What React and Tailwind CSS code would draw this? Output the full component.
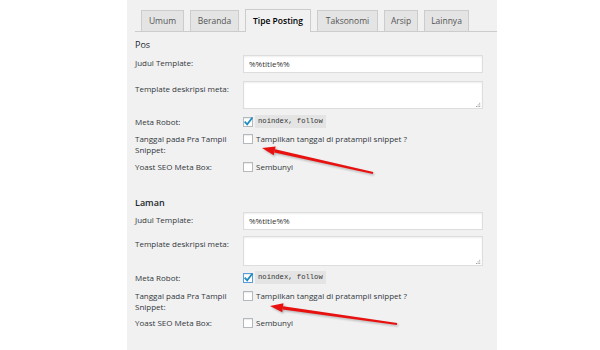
import React from "react";

const TABS = [
  { label: "Umum", w: "w-[43px]" },
  { label: "Beranda", w: "w-[49px]" },
  { label: "Tipe Posting", w: "w-[66px]", active: true },
  { label: "Taksonomi", w: "w-[61px]" },
  { label: "Arsip", w: "w-[34px]" },
  { label: "Lainnya", w: "w-[45px]" },
];

function Check({ checked, focus }) {
  return (
    <span
      className={
        "relative inline-block w-[10px] h-[10px] shrink-0 bg-white border shadow-[inset_0_1px_1px_rgba(0,0,0,0.08)] " +
        (focus ? "border-[#5b9dd9]" : "border-[#b4b9be]")
      }
    >
      {checked && (
        <svg viewBox="0 0 10 10" className="absolute -left-[1px] -top-[2px] w-[11px] h-[11px]">
          <path d="M1.5 5.2 L3.8 7.6 L8.6 1.4" fill="none" stroke="#1e8cbe" strokeWidth="1.6" />
        </svg>
      )}
    </span>
  );
}

function Grip() {
  return (
    <svg viewBox="0 0 6 6" className="absolute right-[1px] bottom-[1px] w-[5px] h-[5px]">
      <rect x="4" y="1" width="1" height="1" fill="#777" />
      <rect x="2" y="3" width="1" height="1" fill="#777" />
      <rect x="4" y="3" width="1" height="1" fill="#777" />
      <rect x="0" y="5" width="1" height="1" fill="#777" />
      <rect x="2" y="5" width="1" height="1" fill="#777" />
      <rect x="4" y="5" width="1" height="1" fill="#777" />
    </svg>
  );
}

function Section({ title, bold, gaps }) {
  return (
    <div>
      <div className={"h-[12px] leading-[12px] text-[9px] text-[#23282d] " + (bold ? "font-semibold" : "")}>{title}</div>

      {/* Judul Template */}
      <div className={"flex " + gaps[0]}>
        <div className="w-[108px] pt-[2px] leading-[11px]">Judul Template:</div>
        <div className="w-[240px] h-[18px] bg-white border border-[#ddd] shadow-[inset_0_1px_2px_rgba(0,0,0,0.07)] pl-[5px] leading-[16px] text-[#333]">
          %%title%%
        </div>
      </div>

      {/* deskripsi */}
      <div className={"flex " + gaps[1]}>
        <div className="w-[108px] pt-[2px] leading-[11px]">Template deskripsi meta:</div>
        <div className={"relative w-[240px] bg-white border border-[#ddd] shadow-[inset_0_1px_2px_rgba(0,0,0,0.07)] " + gaps[5]}>
          <Grip />
        </div>
      </div>

      {/* Meta Robot */}
      <div className={"flex items-center h-[13px] " + gaps[2]}>
        <div className="w-[108px] leading-[13px]">Meta Robot:</div>
        <div className="flex items-center gap-[2px]">
          <Check checked focus={bold} />
          <code className="h-[13px] leading-[13px] px-[3px] bg-[#e4e4e4] text-[#333] text-[7.2px] font-['Liberation_Mono',monospace]">
            noindex, follow
          </code>
        </div>
      </div>

      {/* Tanggal */}
      <div className={"flex " + gaps[3]}>
        <div className="w-[108px] leading-[11px]">
          Tanggal pada Pra Tampil
          <br />
          Snippet:
        </div>
        <div className="flex items-start gap-[3px] leading-[11px]">
          <span className="pt-[0.5px]"><Check /></span>
          <span>Tampilkan tanggal di pratampil snippet ?</span>
        </div>
      </div>

      {/* Yoast */}
      <div className={"flex items-center h-[11px] " + gaps[4]}>
        <div className="w-[108px] leading-[11px]">Yoast SEO Meta Box:</div>
        <div className="flex items-center gap-[3px] leading-[11px]">
          <Check />
          <span>Sembunyi</span>
        </div>
      </div>
    </div>
  );
}

function Arrow({ tip, tail }) {
  const [tx, ty] = tip;
  const [ex, ey] = tail;
  const dx = ex - tx;
  const dy = ey - ty;
  const len = Math.hypot(dx, dy);
  const ux = dx / len;
  const uy = dy / len;
  const nx = -uy;
  const ny = ux;
  const hl = 13;
  const hw = 4.5;
  const bx = tx + ux * hl;
  const by = ty + uy * hl;
  const head = `${tx},${ty} ${bx + nx * hw},${by + ny * hw} ${bx - nx * hw},${by - ny * hw}`;
  const w0 = 1.6;
  const w1 = 1.1;
  const line = `${bx + nx * w0},${by + ny * w0} ${ex + nx * w1},${ey + ny * w1} ${ex - nx * w1},${ey - ny * w1} ${bx - nx * w0},${by - ny * w0}`;
  return (
    <g>
      <g transform="translate(1.2,1.5)" opacity="0.25" fill="#000" style={{ filter: "blur(1px)" }}>
        <polygon points={head} />
        <polygon points={line} />
      </g>
      <g fill="#e8110f">
        <polygon points={head} />
        <polygon points={line} />
      </g>
    </g>
  );
}

export default function App() {
  return (
    <div className="relative w-[600px] h-[350px] bg-white overflow-hidden font-['Open_Sans',sans-serif] text-[8px] text-[#32373c]">
      <div className="ml-[127px] w-[370px] h-full bg-[#f1f1f1] pl-[8px]">
        {/* Tabs */}
        <div className="pt-[9px]">
          <div className="flex items-end gap-[6px] pl-[6px] h-[23px] border-b border-[#ccc]">
            {TABS.map((t) =>
              t.active ? (
                <div
                  key={t.label}
                  className={t.w + " h-[23px] -mb-[1px] bg-[#f1f1f1] border border-b-0 border-[#ccc] flex items-center justify-center text-[8.5px] font-semibold text-black"}
                >
                  {t.label}
                </div>
              ) : (
                <div
                  key={t.label}
                  className={t.w + " h-[21px] bg-[#e4e4e4] border border-b-0 border-[#ccc] flex items-center justify-center text-[8.5px] text-[#555]"}
                >
                  {t.label}
                </div>
              )
            )}
          </div>
        </div>

        <div className="mt-[7px]">
          <Section title="Pos" gaps={["mt-[4px]", "mt-[8px]", "mt-[6px]", "mt-[5px]", "mt-[6px]", "h-[28px]"]} />
        </div>
        <div className="mt-[25px]">
          <Section title="Laman" bold gaps={["mt-[3px]", "mt-[6px]", "mt-[5px]", "mt-[6px]", "mt-[5px]", "h-[30px]"]} />
        </div>
      </div>

      {/* annotation arrows */}
      <svg className="absolute inset-0 w-[600px] h-[350px] pointer-events-none" viewBox="0 0 600 350">
        <Arrow tip={[262, 148]} tail={[373, 173]} />
        <Arrow tip={[270, 306]} tail={[397, 324]} />
      </svg>
    </div>
  );
}
